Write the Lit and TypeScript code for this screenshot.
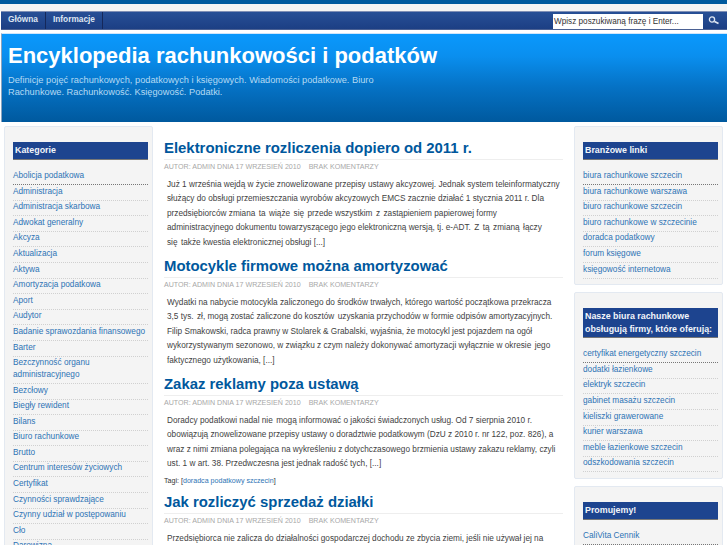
import { LitElement, html, css } from "lit";
import { customElement } from "lit/decorators.js";

const cats = ["Abolicja podatkowa","Administracja","Administracja skarbowa","Adwokat generalny","Akcyza","Aktualizacja","Aktywa","Amortyzacja podatkowa","Aport","Audytor","Badanie sprawozdania finansowego","Barter","Bezczynność organu administracyjnego","Bezcłowy","Biegły rewident","Bilans","Biuro rachunkowe","Brutto","Centrum interesów życiowych","Certyfikat","Czynności sprawdzające","Czynny udział w postępowaniu","Cło","Darowizna"];
const links1 = ["biura rachunkowe szczecin","biura rachunkowe warszawa","biuro rachunkowe szczecin","biuro rachunkowe w szczecinie","doradca podatkowy","forum księgowe","księgowość internetowa"];
const links2 = ["certyfikat energetyczny szczecin","dodatki łazienkowe","elektryk szczecin","gabinet masażu szczecin","kieliszki grawerowane","kurier warszawa","meble łazienkowe szczecin","odszkodowania szczecin"];
const posts = [
 {t:"Elektroniczne rozliczenia dopiero od 2011 r.",l:["Już 1 września wejdą w życie znowelizowane przepisy ustawy akcyzowej. Jednak system teleinformatyczny","służący do obsługi przemieszczania wyrobów akcyzowych EMCS zacznie działać 1 stycznia 2011 r. Dla","przedsiębiorców zmiana  ta  wiąże  się  przede wszystkim  z  zastąpieniem papierowej formy","administracyjnego dokumentu towarzyszącego jego elektroniczną wersją, tj. e-ADT.  Z  tą  zmianą  łączy","się  także kwestia elektronicznej obsługi [...]"]},
 {t:"Motocykle firmowe można amortyzować",l:["Wydatki na nabycie motocykla zaliczonego do środków trwałych, którego wartość początkowa przekracza","3,5 tys.  zł, mogą zostać zaliczone do kosztów  uzyskania przychodów w formie odpisów amortyzacyjnych.","Filip Smakowski, radca prawny w Stolarek & Grabalski, wyjaśnia, że motocykl jest pojazdem na ogół","wykorzystywanym sezonowo, w związku z czym należy dokonywać amortyzacji wyłącznie w okresie  jego","faktycznego użytkowania, [...]"]},
 {t:"Zakaz reklamy poza ustawą",l:["Doradcy podatkowi nadal nie  mogą informować o jakości świadczonych usług. Od 7 sierpnia 2010 r.","obowiązują znowelizowane przepisy ustawy o doradztwie podatkowym (DzU z 2010 r. nr 122, poz. 826), a","wraz z nimi zmiana polegająca na wykreśleniu z dotychczasowego brzmienia ustawy zakazu reklamy, czyli","ust. 1 w art. 38. Przedwczesna jest jednak radość tych, [...]"],tag:"doradca podatkowy szczecin"},
 {t:"Jak rozliczyć sprzedaż działki",l:["Przedsiębiorca nie zalicza do działalności gospodarczej dochodu ze zbycia ziemi, jeśli nie używał jej na"]},
];

@customElement("app-root")
export class AppRoot extends LitElement {
  static styles = css`
    :host { display: block; height: 545px; overflow: hidden; background: #fff; font-family: "Liberation Sans", Arial, sans-serif; }
    .top { height: 4px; background: #005a9e; }
    .strip { height: 7px; background: #f4f4f4; }
    .nav { height: 17px; margin: 0 0 3px 1px; display: flex; align-items: stretch; justify-content: space-between; background: linear-gradient(#274f96, #1c3f84); border-top: 1px solid #7f8fb5; border-bottom: 1px solid #4b6193; }
    .menu { display: flex; }
    .menu span { font-size: 8.3px; font-weight: bold; color: #dfe6f2; padding: 0 7px 0 7px; line-height: 14px; border-right: 1px solid #15285a; }
    .search { display: flex; align-items: flex-start; }
    .input { width: 150px; height: 15px; margin-top: 2px; background: #fff; color: #333; font-size: 8.2px; line-height: 15px; padding-left: 1px; box-sizing: border-box; white-space: nowrap; }
    .search svg { margin: 2px 7px 0 5px; display: block; }
    .hdr { height: 89px; margin-left: 1px; box-sizing: border-box; border-left: 1px solid #8da3bd; border-top: 1px solid #cfe6fb; padding: 9px 7px 0 6px; background: linear-gradient(#0a98fc 0%, #0a8fef 25%, #0572c5 60%, #00599e 100%); color: #fff; }
    .hdr h1 { margin: 0; font-size: 22px; line-height: 26px; font-weight: bold; color: #fff; white-space: nowrap; }
    .hdr p { margin: 6px 0 0; width: 400px; font-size: 9.25px; line-height: 11.5px; color: #b5daf3; }
    .cols { display: flex; padding: 4px 4px 0 4px; align-items: flex-start; }
    .side { width: 149px; flex: none; display: flex; flex-direction: column; gap: 7px; }
    .box { background: #f4f4f4; border: 1px solid #e3e9f1; border-radius: 2px; padding: 15px 4px 5.5px 8px; }
    .box h3 { margin: 0 0 9.5px; background: #1d448f; border-bottom: 1px solid #777; color: #f2f5fa; font-size: 8.9px; font-weight: bold; padding: 0 2px; line-height: 17px; }
    .box h3.two { line-height: 13px; padding: 2px 2px 1px; }
    .box ul { margin: 0; padding: 0; list-style: none; }
    .box li { font-size: 8.25px; line-height: 11.7px; color: #2d73b4; padding: 0.6px 0 2.3px; border-bottom: 1px dotted #d0d0d0; }
    .box li:first-child { border-bottom-color: #777; }
    main { flex: 1; min-width: 0; padding: 12.5px 11px 0 11px; }
    .post { margin-bottom: 6.5px; }
    .post h2 { margin: 0; font-size: 14.9px; line-height: 18px; color: #00589d; font-weight: bold; border-bottom: 1px solid #eee; padding-bottom: 2px; }
    .meta { font-size: 7.1px; color: #a8a8a8; line-height: 10px; margin: 2px 0 0; text-transform: uppercase; }
    .meta b { font-weight: normal; margin-left: 6px; }
    .txt { margin: 6.5px 0 0 3px; font-size: 8.24px; line-height: 14.4px; color: #3f3f3f; white-space: pre; }
    .g { font-size: 4px; line-height: 0; }
    .tag { font-size: 7.1px; line-height: 10px; color: #333; margin: 4.5px 0 0; }
    .tag span { color: #2d73b4; }
  `;
  list(a: string[]) { return html`<ul>${a.map(c => html`<li>${c}</li>`)}</ul>`; }
  line(x: string) {
    const parts = x.split("  ");
    return html`${parts.map((s, i) => html`${s}${i < parts.length - 1 ? html` <span class="g"> </span>` : ""}`)}<br>`;
  }
  render() {
    return html`
      <div class="top"></div><div class="strip"></div>
      <div class="nav">
        <div class="menu"><span>Główna</span><span>Informacje</span></div>
        <div class="search"><div class="input">Wpisz poszukiwaną frazę i Enter...</div>
          <svg width="12" height="13" viewBox="0 0 12 13"><circle cx="4" cy="5.5" r="2.6" fill="none" stroke="#dfe6f2" stroke-width="1.3"/><path d="M6.5 7.5l4 2" stroke="#dfe6f2" stroke-width="1.8"/></svg></div>
      </div>
      <div class="hdr"><h1>Encyklopedia rachunkowości i podatków</h1>
        <p>Definicje pojęć rachunkowych, podatkowych i księgowych. Wiadomości podatkowe. Biuro Rachunkowe. Rachunkowość. Księgowość. Podatki.</p></div>
      <div class="cols">
        <div class="side"><div class="box"><h3>Kategorie</h3>${this.list(cats)}</div></div>
        <main>${posts.map(p => html`<div class="post"><h2>${p.t}</h2>
          <div class="meta">Autor: admin dnia 17 wrzesień 2010 <b>Brak komentarzy</b></div>
          <div class="txt">${p.l.map(x => this.line(x))}</div>
          ${p.tag ? html`<div class="tag">Tagi: [<span>${p.tag}</span>]</div>` : ""}</div>`)}</main>
        <div class="side">
          <div class="box"><h3>Branżowe linki</h3>${this.list(links1)}</div>
          <div class="box"><h3 class="two">Nasze biura rachunkowe<br>obsługują firmy, które oferują:</h3>${this.list(links2)}</div>
          <div class="box"><h3>Promujemy!</h3>${this.list(["CaliVita Cennik"])}</div>
        </div>
      </div>`;
  }
}
